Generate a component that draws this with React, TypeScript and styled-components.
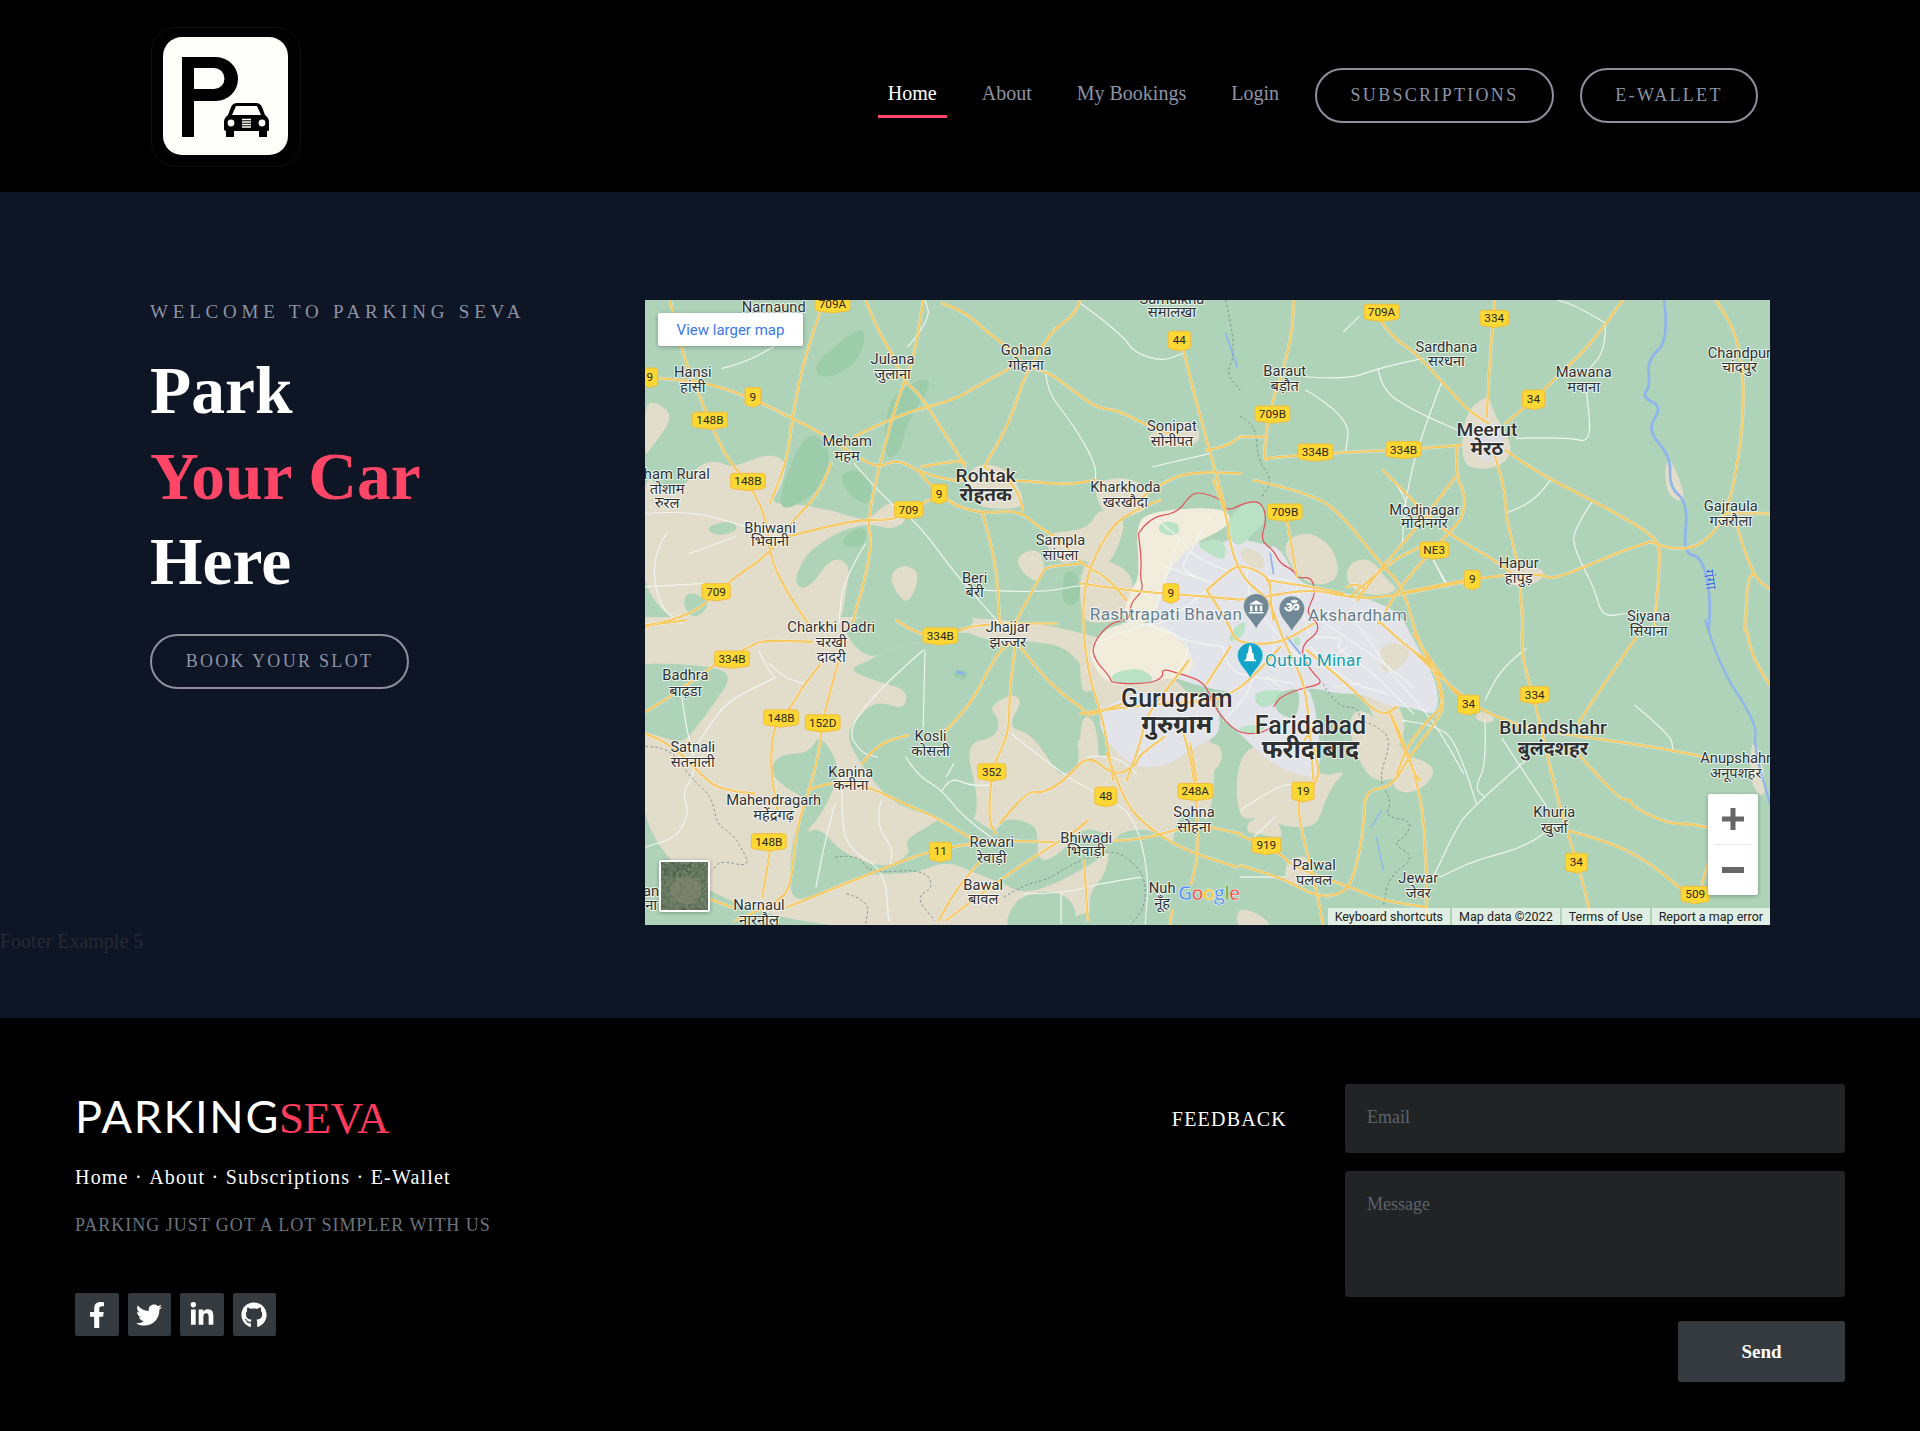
import React from 'react';
import styled, { createGlobalStyle } from 'styled-components';
import { FaFacebookF, FaTwitter, FaLinkedinIn, FaGithub } from 'react-icons/fa';

const serif = '"Liberation Serif", "Times New Roman", serif';
const mapFont = 'Roboto, "Noto Sans", sans-serif';

const GlobalStyle = createGlobalStyle`
  * { box-sizing: border-box; }
  html, body { margin: 0; padding: 0; background: #000; font-family: ${serif}; }
`;

const Page = styled.div`width: 1920px; height: 1431px; overflow: hidden;`;

const Header = styled.header`
  height: 192px; background: #000; display: flex; align-items: center; justify-content: space-between;
  padding: 0 162px 2px 151px;
`;
const LogoMark = styled.svg`width: 150px; height: 140px; display: block; align-self: flex-start; margin-top: 27px;`;
const Nav = styled.nav`display: flex; align-items: center; gap: 26px;`;
const NavLinks = styled.div`display: flex; align-items: center; gap: 25px;`;
const NavLink = styled.a<{ $active?: boolean }>`
  display: block; padding: 9px 10px 10px; line-height: 24px; font-size: 20px; text-decoration: none;
  color: ${p => (p.$active ? '#fff' : '#8d93a5')};
  border-bottom: 3px solid ${p => (p.$active ? '#ff4667' : 'transparent')};
`;
const OutlineButton = styled.a<{ $wide?: number }>`
  display: inline-flex; align-items: center; justify-content: center; height: 55px;
  width: ${p => p.$wide}px; border: 2px solid #8d8f9b; border-radius: 28px; color: #8d93a5;
  font-size: 18px; letter-spacing: 2.3px; text-decoration: none;
`;

const Hero = styled.section`height: 826px; background: #0e1524; padding-top: 108px;`;
const HeroRow = styled.div`display: flex; justify-content: space-between; padding: 0 150px; height: 625px;`;
const HeroCopy = styled.div`width: 470px;`;
const Eyebrow = styled.div`padding-top: 2px; font-size: 19px; line-height: 20px; letter-spacing: 4.8px; color: #8d93a5; white-space: nowrap;`;
const Headline = styled.h1`margin: 26px 0 29px; font-size: 67.5px; line-height: 85.7px; font-weight: 700;`;
const HeadlineLine = styled.span<{ $accent?: boolean }>`display: block; color: ${p => (p.$accent ? '#ff4667' : '#fff')};`;
const Caption = styled.div`font-size: 20px; line-height: 23px; padding-top: 5px; color: #262b33;`;

const MapFrame = styled.div`position: relative; width: 1125px; height: 625px; overflow: hidden; background: #aed3b8;`;
const MapCanvas = styled.svg`display: block; width: 1125px; height: 625px; font-family: ${mapFont};`;
const LargerMap = styled.a`
  position: absolute; left: 13px; top: 13px; width: 145px; height: 33px; background: #fff; border-radius: 2px;
  box-shadow: 0 1px 4px rgba(0,0,0,.3); color: #3b78e7; font: 15px ${mapFont};
  display: flex; align-items: center; justify-content: center; text-decoration: none;
`;
const ZoomControl = styled.div`
  position: absolute; left: 1063px; top: 494px; width: 50px; height: 101px; background: #fff; border-radius: 2px;
  box-shadow: 0 1px 4px rgba(0,0,0,.3); display: flex; flex-direction: column; align-items: center;
`;
const ZoomButton = styled.div`height: 50px; width: 100%; display: flex; align-items: center; justify-content: center;`;
const ZoomDivider = styled.div`width: 37px; height: 1px; background: #e6e6e6;`;
const Thumb = styled.div`
  position: absolute; left: 14px; top: 560px; width: 51px; height: 52px; border: 2px solid #fff; border-radius: 2px;
  box-shadow: 0 1px 4px rgba(0,0,0,.3); overflow: hidden; background: #4f6147;
`;
const ThumbArt = styled.svg`display: block; width: 100%; height: 100%;`;
const Attribution = styled.div`position: absolute; right: 0; bottom: 0; height: 17px; display: flex; gap: 2px;`;
const AttributionItem = styled.span`
  background: rgba(255,255,255,.62); color: #222; font: 12.5px/17px ${mapFont}; padding: 0 7px; white-space: nowrap;
`;

const Footer = styled.footer`
  height: 413px; background: #000; padding: 66px 75px 0; display: flex; justify-content: space-between;
`;
const FooterLeft = styled.div`display: flex; flex-direction: column;`;
const Brand = styled.div`display: flex; align-items: baseline; height: 56px; margin-top: 4px; white-space: nowrap;`;
const BrandFirst = styled.span`font: 400 45px/56px Lato, sans-serif; color: #fff; letter-spacing: 1.7px;`;
const BrandLast = styled.span`font: 400 45px/56px ${serif}; color: #ff3b5c; margin-left: -1px; letter-spacing: -0.4px;`;
const FooterLinks = styled.div`display: flex; margin-top: 21px; font-size: 20px; line-height: 24px; letter-spacing: 1.2px; color: #fff;`;
const FooterLink = styled.a`color: #fff; text-decoration: none;`;
const Dot = styled.span`width: 20.5px; text-align: center;`;
const Tagline = styled.div`margin-top: 25px; font-size: 18px; line-height: 22px; letter-spacing: .98px; color: #6e747b;`;
const Socials = styled.div`display: flex; gap: 9px; margin-top: 57px;`;
const Social = styled.a`
  width: 43.5px; height: 43px; background: #343a3d; border-radius: 2px; color: #fff; font-size: 26px;
  display: flex; align-items: center; justify-content: center;
`;
const Feedback = styled.form`display: flex; gap: 58px;`;
const FeedbackTitle = styled.div`margin-top: 22px; font-size: 20px; line-height: 26px; letter-spacing: 1.2px; color: #fff;`;
const FeedbackFields = styled.div`width: 500px; display: flex; flex-direction: column; align-items: flex-end;`;
const Input = styled.input`
  width: 100%; height: 69px; padding: 0 22px 2px; border: 0; border-radius: 3px; background: #212325; color: #fff;
  font: 18px ${serif}; &::placeholder { color: #5b636b; opacity: 1; }
`;
const TextArea = styled.textarea`
  width: 100%; height: 126px; margin-top: 18px; padding: 24px 22px; border: 0; border-radius: 3px; background: #212325;
  resize: none; display: block; color: #fff; font: 18px/1.1 ${serif}; &::placeholder { color: #5b636b; opacity: 1; }
`;
const Send = styled.button`
  width: 167px; height: 61px; margin-top: 24px; border: 0; border-radius: 3px; background: #343a3d; color: #fff;
  font: 700 19px ${serif};
`;

type Tile = 'nw' | 'ne' | 'sw' | 'se' | 'dl';
const tiles: Record<Tile, [number, number, number, number]> = {
  nw: [522.7, 236.8, 0.3125, 0.2722],
  ne: [1012.7, 236.8, 0.2812, 0.2722],
  sw: [522.7, 506.3, 0.3125, 0.2722],
  se: [1012.7, 506.3, 0.2812, 0.2722],
  dl: [882, 392, 0.2722, 0.2722],
};
const pts = (t: Tile, a: number[]) => {
  const [ox, oy, kx, ky] = tiles[t];
  const r: [number, number][] = [];
  for (let i = 0; i + 1 < a.length; i += 2) r.push([ox + a[i] * kx, oy + a[i + 1] * ky]);
  return r;
};
const f = (n: number) => n.toFixed(1);
const closedPath = (p: [number, number][]) => {
  const mid = (a: [number, number], b: [number, number]) => `${f((a[0] + b[0]) / 2)} ${f((a[1] + b[1]) / 2)}`;
  let d = `M${mid(p[p.length - 1], p[0])}`;
  p.forEach((q, i) => { d += `Q${f(q[0])} ${f(q[1])} ${mid(q, p[(i + 1) % p.length])}`; });
  return d + 'Z';
};
const openPath = (p: [number, number][]) => {
  let d = `M${f(p[0][0])} ${f(p[0][1])}`;
  for (let i = 1; i < p.length - 1; i++) {
    d += `Q${f(p[i][0])} ${f(p[i][1])} ${f((p[i][0] + p[i + 1][0]) / 2)} ${f((p[i][1] + p[i + 1][1]) / 2)}`;
  }
  const e = p[p.length - 1];
  return d + `L${f(e[0])} ${f(e[1])}`;
};

const TAN = '#e2dccb', GRN = '#aed3b8', DRK = '#9ccca9', GRY = '#e3e4e9', CRM = '#f1ecdc', LGT = '#b9e2c6';
const areas: [Tile, string, number[]][] = [
  ['nw', TAN, [13,335,50,340,85,375,60,430,25,480,13,500]],
  ['nw', TAN, [5,540,60,600,120,590,145,530,200,510,240,535,330,490,385,510,370,590,340,640,400,640,500,660,550,680,600,690,640,640,680,640,700,690,660,720,600,700,530,720,470,760,430,800,400,880,440,900,500,800,550,820,540,900,520,1030,5,1030]],
  ['nw', GRN, [170,710,240,690,260,720,200,740]],
  ['nw', GRN, [130,900,190,940,140,990,110,940]],
  ['nw', TAN, [655,850,690,820,735,850,700,950,660,890]],
  ['nw', TAN, [980,800,1040,770,1060,830,1040,880,1000,850]],
  ['nw', TAN, [1180,570,1300,560,1340,640,1290,680,1210,680]],
  ['nw', TAN, [850,530,950,520,1005,620,990,660,860,650]],
  ['nw', TAN, [1040,730,1170,720,1200,650,1280,680,1220,850,1150,800,1100,830]],
  ['nw', TAN, [1320,430,1450,380,1470,470,1340,470]],
  ['nw', DRK, [450,230,530,150,580,110,590,150,560,230,480,270]],
  ['nw', DRK, [660,310,750,260,760,290,700,390,680,490,640,510,640,400]],
  ['nw', DRK, [360,640,400,500,440,430,480,450,500,500,470,600,390,660]],
  ['nw', DRK, [520,560,560,530,610,580,600,650,550,620]],
  ['nw', DRK, [530,740,590,700,590,770,530,770]],
  ['nw', DRK, [1110,830,1150,860,1150,940,1100,950]],
  ['sw', TAN, [0,-10,1500,-10,1500,930,0,930,0,-10]],
  ['sw', GRN, [13,130,80,130,200,140,240,170,200,240,150,320,110,370,60,350,-10,330,-10,140]],
  ['sw', GRN, [540,150,640,190,700,210,690,270,620,240,570,290,540,340,560,400,620,500,680,560,800,600,850,620,880,590,880,510,850,370,930,350,940,300,910,260,970,220,1000,240,960,320,1020,340,1070,420,1100,470,1150,440,1140,340,1180,400,1230,420,1200,240,1130,80,1000,60,900,60,850,30,760,60,660,80,600,120]],
  ['sw', GRN, [340,440,370,400,440,400,470,340,520,430,510,500,470,590,430,640,470,620,530,700,640,745,710,700,690,660,750,620,820,570,880,600,930,640,950,590,1030,610,1040,650,1040,730,1100,700,1150,620,1230,640,1240,690,1090,790,1000,820,950,790,880,760,800,720,720,760,600,760,520,790,450,830,400,840,390,770,400,640,440,540,380,500,350,470]],
  ['sw', GRN, [560,-20,880,-20,860,30,760,60,660,80,600,120,530,40]],
  ['sw', GRN, [960,880,1000,820,1100,810,1150,880,1100,930,960,930]],
  ['sw', GRN, [1230,640,1340,620,1420,700,1500,760,1500,930,1180,930,1170,820,1220,760]],
  ['sw', DRK, [820,150,860,150,850,180,820,170]],
  ['se', GRN, [-200,560,-60,600,-100,800,-200,920]],
  ['se', TAN, [-10,410,70,360,190,420,240,470,310,450,270,490,240,560,220,620,130,620,60,590,-10,600]],
  ['se', TAN, [20,600,100,580,130,660,60,640,20,640]],
  ['se', TAN, [330,180,400,170,470,270,480,330,450,400,540,420,570,460,510,520,440,510,450,440,410,330]],
  ['se', TAN, [690,270,740,290,730,310,680,300]],
  ['se', TAN, [-10,860,60,880,100,930,-10,930]],
  ['se', TAN, [130,720,200,700,200,790,130,800]],
  ['se', TAN, [1480,360,1510,390,1530,540,1480,500]],
  ['ne', TAN, [650,370,720,310,735,370,795,470,760,530,680,540,640,510]],
  ['ne', '#dcdde2', [660,410,760,390,770,490,720,520,670,490]],
  ['ne', TAN, [770,830,880,830,880,870,820,890,770,880]],
  ['ne', TAN, [1230,530,1250,500,1300,640,1240,620]],
  ['dl', TAN, [600,190,680,150,760,200,780,290,720,320,650,290]],
  ['dl', TAN, [800,250,870,230,920,300,960,330,880,350,800,320]],
  ['dl', TAN, [830,680,900,720,940,780,1000,840,950,900,860,900,800,740]],
  ['dl', TAN, [0,240,100,240,170,300,130,420,60,430,0,420]],
  ['dl', TAN, [0,440,40,500,80,610,20,640,0,620]],
  ['dl', TAN, [0,700,50,720,60,900,0,900]],
  ['dl', TAN, [300,800,420,780,430,850,360,900,300,900]],
  ['dl', TAN, [170,860,260,860,270,900,170,900]],
  ['dl', GRY, [200,420,250,290,300,170,400,200,460,170,540,190,600,200,650,300,700,320,800,340,880,360,960,400,1000,480,1070,600,1075,710,990,680,930,680,850,640,760,640,700,620,600,640,450,640,300,600,200,560]],
  ['dl', GRY, [420,640,520,600,640,620,700,620,730,900,640,880,560,840,480,760,410,700]],
  ['dl', GRY, [60,680,200,630,400,640,430,760,340,800,260,860,150,860,60,760]],
  ['dl', TAN, [900,480,1000,500,960,570,900,580]],
  ['dl', TAN, [470,200,540,210,560,270,500,260]],
  ['dl', CRM, [165,125,230,90,440,80,455,135,340,190,290,240,250,300,225,425,120,440,150,330,180,290]],
  ['dl', CRM, [30,490,100,430,230,425,310,480,350,565,290,595,240,595,180,615,85,615,30,545]],
  ['dl', LGT, [440,120,500,60,550,70,560,120,530,150,480,200,450,180]],
  ['dl', LGT, [232,128,292,122,302,165,242,165]],
  ['dl', LGT, [340,190,430,170,440,240,400,230]],
  ['dl', LGT, [90,580,180,560,230,600,170,615,100,610]],
  ['dl', LGT, [520,630,640,630,570,680,530,680]],
  ['dl', LGT, [470,740,560,730,540,760,490,760]],
  ['dl', LGT, [460,440,500,420,490,470,440,490]],
  ['dl', LGT, [640,470,660,470,660,500,640,490]],
  ['dl', GRN, [580,650,640,620,660,640,650,720,590,700]],
  ['dl', GRN, [550,160,590,190,560,210]],
];

const water: [Tile, number, number[]][] = [
  ['ne', 2.2, [1230,30,1245,150,1180,210,1190,290,1165,320,1225,350,1180,420,1250,500,1245,590,1300,640,1285,790,1340,800,1365,920,1360,1020]],
  ['se', 1.8, [1350,0,1385,130,1500,310,1490,380,1540,560]],
  ['nw', 1.3, [1530,130,1560,230]],
  ['se', 1, [410,570,380,620]],
  ['se', 1, [395,650,415,750]],
  ['sw', 2.5, [830,155,845,160]],
  ['dl', 1.4, [570,220,580,280]],
  ['dl', 1.6, [620,470,660,520]],
];

const minor: [Tile, number[]][] = [
  ['nw', [1150,40,1200,80,1270,150,1290,185,1360,215,1420,190]],
  ['nw', [1060,240,1060,300,1130,400,1190,520,1190,570]],
  ['nw', [1340,530,1490,490]],
  ['nw', [700,170,760,90,745,30]],
  ['nw', [560,520,650,640,720,690,830,860,940,1000]],
  ['nw', [215,235,280,215,350,170]],
  ['nw', [15,670,130,660,280,710]],
  ['nw', [70,730,30,800,50,950,110,1000]],
  ['nw', [130,790,250,740]],
  ['nw', [15,890,170,880]],
  ['nw', [900,900,1050,910,1160,880,1280,900]],
  ['nw', [590,760,530,870,520,1000]],
  ['ne', [190,260,310,270,400,235,530,205]],
  ['ne', [400,235,410,300,500,360,630,420]],
  ['ne', [190,300,320,380,305,490]],
  ['ne', [585,275,520,450,480,620,470,760]],
  ['ne', [800,445,950,440,1020,460,1005,300]],
  ['ne', [1060,100,1060,180,1010,240]],
  ['ne', [1060,100,980,50,920,30]],
  ['ne', [900,570,860,630,770,670]],
  ['ne', [1025,630,965,720,970,780,1030,900,1050,980,1120,970]],
  ['ne', [560,810,600,880]],
  ['ne', [300,125,345,80]],
  ['sw', [740,90,630,200,540,330,580,400,620,410]],
  ['sw', [745,90,740,320]],
  ['sw', [695,410,720,460,790,510,830,570,880,620,930,660]],
  ['sw', [790,510,810,470,860,495,915,495]],
  ['sw', [820,430,800,470]],
  ['sw', [530,450,525,610,550,690,640,750,650,900]],
  ['sw', [510,550,490,630,460,800]],
  ['sw', [630,540,615,610,660,680,655,730]],
  ['sw', [970,340,1100,460,1210,530,1290,580,1330,760,1320,910]],
  ['sw', [110,230,120,320,150,450,110,520,130,570,100,650,15,680]],
  ['sw', [1000,820,1100,820,1200,790,1310,770]],
  ['sw', [1100,820,1100,910]],
  ['sw', [340,130,370,170,430,190]],
  ['sw', [310,90,345,170,360,170,230,240,180,320,150,370]],
  ['se', [760,355,890,560]],
  ['se', [1145,255,1250,345,1255,385]],
  ['se', [840,410,660,570,620,640,560,770]],
  ['se', [685,550,630,360,560,315,470,300]],
  ['se', [710,300,715,430,680,505,710,530]],
  ['se', [880,640,830,680,680,720,580,770]],
  ['se', [830,85,760,140,710,240]],
  ['se', [0,570,100,500,160,490]],
  ['se', [0,770,130,770]],
  ['se', [100,590,40,650]],
  ['dl', [210,105,300,170,340,230,440,270]],
  ['dl', [300,170,270,260,210,430]],
  ['dl', [400,90,320,230,300,270,400,310]],
  ['dl', [260,260,400,310]],
  ['dl', [380,330,260,430,200,430,40,490]],
  ['dl', [200,430,300,480,430,500]],
  ['dl', [130,430,220,430,340,490,290,580]],
  ['dl', [430,500,440,570,520,590,640,610]],
  ['dl', [500,270,500,340,560,420,620,500,660,530]],
  ['dl', [560,290,650,300,650,340,690,470]],
  ['dl', [580,460,580,560]],
  ['dl', [700,470,800,470,760,500,860,560,1000,700]],
  ['dl', [720,420,900,540,1000,620]],
  ['dl', [820,420,860,470,940,590,1060,720,1150,880]],
  ['dl', [690,500,780,600,920,640]],
  ['dl', [720,560,800,500]],
  ['dl', [0,310,160,330]],
  ['dl', [20,830,100,820,170,880]],
  ['dl', [520,590,500,650,430,720]],
  ['dl', [560,590,600,620]],
  ['dl', [760,620,840,610]],
  ['dl', [940,0,980,60,970,80]],
  ['dl', [1060,240,1100,320]],
];

const dashed: [Tile, number[]][] = [
  ['sw', [15,378,80,380,130,470,190,530,200,610,240,640,265,680,290,740,210,720,190,750]],
  ['sw', [510,710,570,700,600,760,740,745,770,800,720,830,770,900]],
  ['sw', [540,820,600,840,590,910]],
  ['sw', [950,830,1010,790,1060,780,1130,730,1240,680,1320,760,1320,860,1280,915]],
  ['se', [240,190,280,260,340,260,350,300,400,320,440,360,400,480,440,540,420,590,500,600,480,650,440,670,510,710,430,770,415,860]],
  ['ne', [0,380,45,400,50,510,95,570,60,625]],
  ['nw', [1530,30,1560,180,1530,250,1568,300]],
];

const red: [Tile, number[]][] = [
  ['dl', [175,160,210,110,290,100,330,45,360,35,430,60,440,95,500,65,545,65,560,120,540,180,580,210,600,250,640,270,650,295,695,290,705,340,690,370,680,400,715,430,710,460,670,490,665,530,700,580,730,610,660,625,600,650,580,680]],
  ['dl', [175,160,185,240,180,290,190,330,150,370,150,420,90,425,35,495,45,540,90,590,95,610,210,610,250,590,245,565,300,580,375,605,400,680,470,760,540,760,575,740]],
];

const roads: [Tile, number[]][] = [
  ['nw', [15,262,90,268,180,280,295,325,390,380,475,430,540,480,590,515,625,530,675,508,730,545,790,565,830,572,1000,570,1110,585,1190,570]],
  ['nw', [590,30,620,120,660,190,690,275,730,310,790,420,830,490,850,530]],
  ['nw', [740,30,720,190,690,275,660,380,625,530,595,690,605,760,590,860,550,1020]],
  ['nw', [790,40,850,65,900,120,960,170,1010,230]],
  ['nw', [1150,30,1140,70,1080,120,1050,170,1010,250,990,310,960,410,900,530]],
  ['nw', [1010,230,1060,240,1130,300,1195,355,1250,360,1330,410,1410,440]],
  ['nw', [560,440,670,375,820,330,880,290,965,235]],
  ['nw', [1410,130,1440,280,1490,490,1530,660]],
  ['nw', [80,30,85,70,115,200,150,300,185,400,230,510,285,580,330,680,340,800,380,900,440,1000]],
  ['nw', [470,70,430,200,400,370,385,510,340,640]],
  ['nw', [500,520,470,610,400,690,340,790,250,860,200,910,140,970,15,1010]],
  ['nw', [385,740,550,690,640,690,680,680,780,610,830,650,900,670,990,660,1040,710,1100,750,1150,820,1220,860,1270,930]],
  ['nw', [1000,660,990,590,900,530]],
  ['nw', [730,545,760,590,830,650]],
  ['nw', [735,530,830,510,850,520]],
  ['nw', [895,670,930,800,940,1000]],
  ['nw', [1290,640,1370,570,1450,545,1568,550]],
  ['nw', [1480,480,1530,470,1568,440]],
  ['nw', [970,1020,1050,850,1060,830,1150,820]],
  ['ne', [155,30,155,100,130,220,80,380,70,500,75,510]],
  ['ne', [75,505,220,490,470,480,640,465]],
  ['ne', [0,440,75,440]],
  ['ne', [410,95,440,140,510,190,590,280,660,360,720,400]],
  ['ne', [738,30,725,200,715,380]],
  ['ne', [1110,30,1030,150,920,260,850,330,770,400]],
  ['ne', [770,480,850,540,1000,620,1110,680,1210,745,1220,800,1200,1020]],
  ['ne', [1190,755,1110,780,910,870,870,850,700,860,480,905]],
  ['ne', [1190,755,1285,795,1400,715,1450,500,1465,280,1440,130,1380,30]],
  ['ne', [740,500,770,600,770,680,810,830,820,1020]],
  ['ne', [630,470,625,560,650,600,650,680,590,745,470,880,400,1000]],
  ['ne', [625,560,500,730,410,830,340,930]],
  ['ne', [415,540,480,610,530,660,600,730,740,810,800,860]],
  ['ne', [1440,700,1480,850,1540,900]],
  ['ne', [1540,670,1410,670]],
  ['ne', [1465,1020,1470,870,1490,850]],
  ['sw', [15,275,80,230,200,130]],
  ['sw', [200,130,285,80,320,60,450,65]],
  ['sw', [15,15,120,0]],
  ['sw', [670,0,720,40,790,50,880,10,1090,10]],
  ['sw', [470,135,430,190,390,270,350,310,340,450,360,570]],
  ['sw', [520,120,475,300,470,390,440,520,410,620,395,790,370,840,250,900]],
  ['sw', [340,690,320,830]],
  ['sw', [15,340,80,370,150,450,200,505,300,520]],
  ['sw', [440,510,500,480,600,500,680,545,790,600,870,660,920,660,1080,665]],
  ['sw', [580,430,620,370,700,345]],
  ['sw', [800,330,860,260,910,150,940,90,980,60]],
  ['sw', [980,80,965,210,965,340,920,440,910,600,930,640]],
  ['sw', [980,60,1040,150,1100,220,1165,270,1165,290,1260,250]],
  ['sw', [1220,400,1250,500,1300,600,1420,690,1560,740]],
  ['sw', [940,610,1010,510,1050,520,1110,480,1170,400,1240,470,1300,430,1300,410,1370,350]],
  ['sw', [1170,600,1130,640,1090,665,950,770,800,900]],
  ['sw', [385,860,600,760,760,690,870,670]],
  ['sw', [890,720,830,800,780,900]],
  ['sw', [1240,660,1310,660,1450,610,1568,640]],
  ['sw', [1420,340,1450,450,1460,700,1440,790]],
  ['sw', [1160,720,1170,900]],
  ['sw', [180,835,240,860]],
  ['sw', [1390,870,1385,915]],
  ['se', [0,735,120,770,220,830,300,820,330,770,360,620,360,510,440,500,490,410,580,290,590,250,560,130,490,85,400,0]],
  ['se', [440,285,490,400,530,560,540,730,540,915]],
  ['se', [180,400,190,300,240,480,170,520,170,600,220,800,240,915]],
  ['se', [500,90,640,230,740,290,860,330,1000,350,1200,380,1350,410]],
  ['se', [820,0,810,90,860,260,920,540,1000,800,1020,915]],
  ['se', [1150,50,1050,200,980,310]],
  ['se', [980,400,1100,540,1130,535,1140,560,1240,610,1310,610,1370,625]],
  ['se', [950,630,1060,660,1180,720,1285,810]],
  ['se', [1470,30,1480,100,1540,200]],
  ['se', [0,645,110,690,150,740,320,800,410,840,540,860]],
  ['se', [1360,720,1340,790]],
  ['dl', [400,0,440,100,450,200,490,300,570,360,600,460,650,560,680,640,700,900]],
  ['dl', [240,60,130,100,60,190,10,320,10,470,30,600,70,720,100,900]],
  ['dl', [520,0,700,40,790,110,900,250,970,320,1010,480,1080,600,1090,680,1040,720,980,800,950,880]],
  ['dl', [0,310,180,335,270,340,440,355,500,360,690,325,800,350,900,355,1180,300]],
  ['dl', [380,330,450,265,490,255,570,290,570,360,580,420]],
  ['dl', [380,330,440,420,460,470,490,490,600,490,700,430]],
  ['dl', [560,300,700,320,790,340]],
  ['dl', [450,500,380,610]],
  ['dl', [600,500,510,600,450,640,410,660,240,670,60,690,0,700]],
  ['dl', [325,540,290,590,200,700,180,790,140,900]],
  ['dl', [680,510,800,610,900,710,950,680]],
  ['dl', [930,700,1000,880,1020,900]],
  ['dl', [800,320,820,310,860,325,830,350]],
  ['dl', [810,350,920,250,1020,200]],
  ['dl', [620,120,650,290]],
  ['dl', [1000,460,1100,620,1180,680]],
  ['dl', [330,790,350,900]],
];

const shields: [number, number, string][] = [
  [680,248,'709A'],[1128,255,'709A'],[1220,260,'334'],[963,278,'44'],[531,308,'9'],[615,324,'9'],[1252,326,'34'],
  [580,343,'148B'],[1039,338,'709B'],[1074,369,'334B'],[1146,367,'334B'],[611,393,'148B'],[767,403,'9'],[742,416,'709'],
  [1049,418,'709B'],[1171,449,'NE3'],[956,484,'9'],[1202,473,'9'],[585,483,'709'],[768,519,'334B'],[598,538,'334B'],
  [1199,575,'34'],[1253,567,'334'],[638,586,'148B'],[672,590,'152D'],[810,630,'352'],[976,646,'248A'],[903,650,'48'],
  [1064,646,'19'],[628,687,'148B'],[768,695,'11'],[1034,690,'919'],[1287,704,'34'],[1384,730,'509'],
];

type Label = [number, number, string, number?];
const labels: Label[] = [
  [632,251,'Narnaund'],[566,304,'Hansi'],[566,316,'हांसी'],[729,293,'Julana'],[729,305,'जुलाना'],[838,286,'Gohana'],[838,298,'गोहाना'],
  [957,244,'Samalkha'],[957,255,'समालखा'],[1049,303,'Baraut'],[1049,315,'बड़ौत'],[1181,283,'Sardhana'],[1181,295,'सरधना'],[1293,304,'Mawana'],[1293,316,'मवाना'],
  [1420,288,'Chandpur'],[1420,300,'चांदपुर'],[692,360,'Meham'],[692,372,'महम'],[957,348,'Sonipat'],[957,360,'सोनीपत'],
  [1214,351,'Meerut',1],[1214,366,'मेरठ',4],[805,388,'Rohtak',1],[805,404,'रोहतक',4],[919,398,'Kharkhoda'],[919,410,'खरखौदा'],
  [553,387,'ham Rural'],[545,399,'तोशाम'],[545,411,'रुरल'],[1163,416,'Modinagar'],[1163,427,'मोदीनगर'],[1413,413,'Gajraula'],[1413,425,'गजरौला'],
  [629,431,'Bhiwani'],[629,442,'भिवानी'],[866,441,'Sampla'],[866,453,'सांपला'],[1240,460,'Hapur'],[1240,472,'हापुड़'],[796,472,'Beri'],[796,483,'बेरी'],
  [1346,503,'Siyana'],[1346,515,'सियाना'],[679,512,'Charkhi Dadri'],[679,524,'चरखी'],[679,536,'दादरी'],[823,512,'Jhajjar'],[823,524,'झज्जर'],
  [560,551,'Badhra'],[560,564,'बाढ़डा'],[961,570,'Gurugram',2],[961,591,'गुरुग्राम',5],[1070,592,'Faridabad',2],[1070,612,'फरीदाबाद',5],
  [1268,594,'Bulandshahr',3],[1268,611,'बुलंदशहर',4],[566,610,'Satnali'],[566,622,'सतनाली'],[760,601,'Kosli'],[760,613,'कोसली'],[695,630,'Kanina'],[695,641,'कनीना'],
  [1417,619,'Anupshahr'],[1417,631,'अनूपशहर'],[632,653,'Mahendragarh'],[632,665,'महेंद्रगढ़'],[1269,663,'Khuria'],[1269,676,'खुर्जा'],[975,663,'Sohna'],[975,675,'सोहना'],
  [810,687,'Rewari'],[810,700,'रेवाड़ी'],[887,684,'Bhiwadi'],[887,695,'भिवाड़ी'],[1073,706,'Palwal'],[1073,718,'पलवल'],[803,722,'Bawal'],[803,734,'बावल'],
  [1158,717,'Jewar'],[1158,729,'जेवर'],[949,725,'Nuh'],[949,737,'नूँह'],[620,739,'Narnaul'],[620,751,'नारनौल'],[532,727,'an'],[532,739,'ना'],
];
const labelSize: Record<number, number> = { 0: 12, 1: 15.6, 2: 20.4, 3: 15.6, 4: 15.6, 5: 20.4 };
const labelWeight: Record<number, number> = { 0: 400, 1: 500, 2: 500, 3: 500, 4: 700, 5: 700 };

const MapLabel = styled.text<{ $kind?: number }>`
  text-anchor: middle; dominant-baseline: central; paint-order: stroke; stroke: rgba(255,255,255,.75); stroke-width: 1.6px;
  stroke-linejoin: round; fill: #2f3133;
  font-size: ${p => labelSize[p.$kind ?? 0]}px;
  font-weight: ${p => labelWeight[p.$kind ?? 0]};
`;
const RiverLabel = styled.text`
  text-anchor: middle; dominant-baseline: central; font-size: 12px; fill: #3b6fd8; paint-order: stroke;
  stroke: rgba(255,255,255,.35); stroke-width: 1px;
`;
const PoiLabel = styled.text<{ $color: string }>`
  text-anchor: start; dominant-baseline: central; paint-order: stroke; stroke: rgba(255,255,255,.7); stroke-width: 1.6px;
  fill: ${p => p.$color}; font-size: 14px; letter-spacing: .2px;
`;
const PinGlyph = styled.text`text-anchor: middle; dominant-baseline: central; fill: #fff; font-size: 13px; font-weight: 700;`;
const ShieldText = styled.text`text-anchor: middle; dominant-baseline: central; font-size: 9.6px; fill: #2c2a1f;`;
const GoogleText = styled.text`font-family: "Open Sans", sans-serif; font-size: 16px; font-weight: 600; letter-spacing: -.6px;`;

const Shield = ({ x, y, t }: { x: number; y: number; t: string }) => {
  const w = 7.5 + t.length * 5.2;
  const h = t.length < 3 ? 13 : 11;
  return (
    <g>
      <path
        d={`M${x - w / 2 + 2} ${y - h / 2 - 1}H${x + w / 2 - 2}Q${x + w / 2} ${y - h / 2 - 1} ${x + w / 2} ${y - h / 2 + 1}V${y + h / 2 - 1}Q${x + w / 2} ${y + h / 2} ${x + w / 2 - 2} ${y + h / 2 + .4}L${x} ${y + h / 2 + 2}L${x - w / 2 + 2} ${y + h / 2 + .4}Q${x - w / 2} ${y + h / 2} ${x - w / 2} ${y + h / 2 - 1}V${y - h / 2 + 1}Q${x - w / 2} ${y - h / 2 - 1} ${x - w / 2 + 2} ${y - h / 2 - 1}Z`}
        fill="#fdd835" stroke="#f4bb3a" strokeWidth=".8"
      />
      <ShieldText x={x} y={y}>{t}</ShieldText>
    </g>
  );
};

const Pin = ({ x, y, color, children }: { x: number; y: number; color: string; children?: React.ReactNode }) => (
  <g>
    <path d={`M${x} ${y + 18.5}C${x - 2} ${y + 13} ${x - 10.4} ${y + 7} ${x - 10.4} ${y}A10.4 10.4 0 1 1 ${x + 10.4} ${y}C${x + 10.4} ${y + 7} ${x + 2} ${y + 13} ${x} ${y + 18.5}Z`} fill={color} stroke="#fff" strokeOpacity=".5" strokeWidth=".6" />
    {children}
  </g>
);

const MapArt = () => (
  <MapCanvas viewBox="527 245 918 510" aria-label="Map">
    <rect x="527" y="245" width="918" height="510" fill={GRN} />
    {areas.map(([t, c, a], i) => <path key={i} d={closedPath(pts(t, a))} fill={c} />)}
    <g fill="none" stroke="#8fb4ec" strokeLinejoin="round" strokeLinecap="round">
      {water.map(([t, w, a], i) => <path key={i} d={openPath(pts(t, a))} strokeWidth={w} />)}
    </g>
    <g fill="none" stroke="#f1f5f1" strokeWidth=".95" strokeLinejoin="round" strokeLinecap="round">
      {minor.map(([t, a], i) => <path key={i} d={openPath(pts(t, a))} />)}
    </g>
    <g fill="none" stroke="#7f8a8c" strokeWidth=".8" strokeDasharray="2 2">
      {dashed.map(([t, a], i) => <path key={i} d={openPath(pts(t, a))} />)}
    </g>
    <g fill="none" stroke="#e2545a" strokeWidth="1" strokeLinejoin="round">
      {red.map(([t, a], i) => <path key={i} d={openPath(pts(t, a))} />)}
    </g>
    <g fill="none" strokeLinejoin="round" strokeLinecap="round">
      {roads.map(([t, a], i) => <path key={i} d={openPath(pts(t, a))} stroke="#fff" strokeOpacity=".45" strokeWidth="2.8" />)}
      {roads.map(([t, a], i) => <path key={i} d={openPath(pts(t, a))} stroke="#f5bb45" strokeWidth="1.7" />)}
      {roads.map(([t, a], i) => <path key={i} d={openPath(pts(t, a))} stroke="#fde08a" strokeWidth=".6" />)}
    </g>
    {shields.map(([x, y, t], i) => <Shield key={i} x={x} y={y} t={t} />)}
    <RiverLabel x="1396" y="473" transform="rotate(82 1396 473)">गंगा</RiverLabel>
    {labels.map(([x, y, t, k], i) => <MapLabel key={i} x={x} y={y} $kind={k}>{t}</MapLabel>)}
    <PoiLabel x="890" y="501" $color="#667f8c">Rashtrapati Bhavan</PoiLabel>
    <PoiLabel x="1068" y="502" $color="#667f8c">Akshardham</PoiLabel>
    <PoiLabel x="1033" y="539" $color="#129eaf">Qutub Minar</PoiLabel>
    <Pin x={1025.7} y={495} color="#718996">
      <path d="M1019.700 493.500l6-3.500 6 3.500zM1020.700 494.500h2v4.500h-2zM1024.700 494.500h2v4.500h-2zM1028.700 494.500h2v4.500h-2zM1019.700 499.500h12v1.400h-12z" fill="#fff" />
    </Pin>
    <Pin x={1054.8} y={497} color="#718996"><PinGlyph x={1054.8} y={496}>ॐ</PinGlyph></Pin>
    <Pin x={1020.8} y={535} color="#12a5c9">
      <path d="M1020 527h1.600l1 6h.8l.8 5.500h1.300v1.300h-9.400v-1.300h1.300l.8-5.500h.8z" fill="#fff" />
    </Pin>
    <GoogleText x="962" y="735" stroke="#fff" strokeWidth=".4">
      <tspan fill="#4285f4">G</tspan><tspan fill="#ea4335">o</tspan><tspan fill="#fbbc05">o</tspan><tspan fill="#4285f4">g</tspan><tspan fill="#34a853">l</tspan><tspan fill="#ea4335">e</tspan>
    </GoogleText>
  </MapCanvas>
);

const Satellite = () => (
  <ThumbArt viewBox="0 0 51 52" aria-hidden="true">
    <defs>
      <filter id="sat" x="0" y="0" width="100%" height="100%">
        <feTurbulence type="fractalNoise" baseFrequency=".3" numOctaves="3" seed="7" />
        <feColorMatrix values="0 0 0 0 .2  0 0 0 0 .26  0 0 0 0 .18  .9 .9 0 0 -.3" />
      </filter>
    </defs>
    <rect width="51" height="52" fill="#46593f" />
    <ellipse cx="27" cy="31" rx="17" ry="15" fill="#746f5c" />
    <ellipse cx="14" cy="5" rx="24" ry="10" fill="#324b32" />
    <rect width="51" height="52" filter="url(#sat)" />
  </ThumbArt>
);

const Logo = () => (
  <LogoMark viewBox="0 0 150 140" aria-label="Parking Seva">
    <rect x=".5" y=".5" width="149" height="139" rx="24" fill="#000" stroke="#111" />
    <rect x="12" y="10" width="125" height="118" rx="19" fill="#fdfdf9" />
    <path fillRule="evenodd" d="M31 30H65A22 22 0 0 1 65 74H43V110H31ZM43 41V62H63A10.500 10.500 0 0 0 63 41Z" fill="#000" />
    <path d="M86 76H105Q109 76 111 80L114 88Q118 91 118 95V103Q118 104 116 104V110H108V104H83V110H75V104Q73 104 73 102V95Q73 91 77 88L80 80Q82 76 86 76Z" fill="#000" />
    <path d="M85 79H106L110 88H81Z" fill="#fdfdf9" />
    <circle cx="80" cy="96" r="3.400" fill="#fdfdf9" />
    <circle cx="111" cy="96" r="3.400" fill="#fdfdf9" />
    <path d="M91 92.500H100M91 95H100M91 97.500H100M91 100H100" stroke="#fdfdf9" strokeWidth="1.300" />
  </LogoMark>
);

export default function App() {
  return (
    <Page>
      <GlobalStyle />
      <Header>
        <Logo />
        <Nav>
          <NavLinks>
            <NavLink href="#" $active>Home</NavLink>
            <NavLink href="#">About</NavLink>
            <NavLink href="#">My Bookings</NavLink>
            <NavLink href="#">Login</NavLink>
          </NavLinks>
          <OutlineButton href="#" $wide={239}>SUBSCRIPTIONS</OutlineButton>
          <OutlineButton href="#" $wide={178}>E-WALLET</OutlineButton>
        </Nav>
      </Header>
      <Hero>
        <HeroRow>
          <HeroCopy>
            <Eyebrow>WELCOME TO PARKING SEVA</Eyebrow>
            <Headline>
              <HeadlineLine>Park</HeadlineLine>
              <HeadlineLine $accent>Your Car</HeadlineLine>
              <HeadlineLine>Here</HeadlineLine>
            </Headline>
            <OutlineButton href="#" $wide={259}>BOOK YOUR SLOT</OutlineButton>
          </HeroCopy>
          <MapFrame>
            <MapArt />
            <LargerMap href="#">View larger map</LargerMap>
            <ZoomControl>
              <ZoomButton>
                <svg width="22" height="22" viewBox="0 0 22 22" aria-hidden="true"><path d="M8.500 0h5v8.500H22v5h-8.500V22h-5v-8.500H0v-5h8.500z" fill="#666" /></svg>
              </ZoomButton>
              <ZoomDivider />
              <ZoomButton>
                <svg width="22" height="6" viewBox="0 0 22 6" aria-hidden="true"><rect width="22" height="6" fill="#666" /></svg>
              </ZoomButton>
            </ZoomControl>
            <Thumb><Satellite /></Thumb>
            <Attribution>
              <AttributionItem>Keyboard shortcuts</AttributionItem>
              <AttributionItem>Map data ©2022</AttributionItem>
              <AttributionItem>Terms of Use</AttributionItem>
              <AttributionItem>Report a map error</AttributionItem>
            </Attribution>
          </MapFrame>
        </HeroRow>
        <Caption>Footer Example 5</Caption>
      </Hero>
      <Footer>
        <FooterLeft>
          <Brand><BrandFirst>PARKING</BrandFirst><BrandLast>SEVA</BrandLast></Brand>
          <FooterLinks>
            <FooterLink href="#">Home</FooterLink><Dot>·</Dot>
            <FooterLink href="#">About</FooterLink><Dot>·</Dot>
            <FooterLink href="#">Subscriptions</FooterLink><Dot>·</Dot>
            <FooterLink href="#">E-Wallet</FooterLink>
          </FooterLinks>
          <Tagline>PARKING JUST GOT A LOT SIMPLER WITH US</Tagline>
          <Socials>
            <Social href="#" aria-label="Facebook"><FaFacebookF /></Social>
            <Social href="#" aria-label="Twitter"><FaTwitter /></Social>
            <Social href="#" aria-label="LinkedIn"><FaLinkedinIn /></Social>
            <Social href="#" aria-label="GitHub"><FaGithub /></Social>
          </Socials>
        </FooterLeft>
        <Feedback onSubmit={e => e.preventDefault()}>
          <FeedbackTitle>FEEDBACK</FeedbackTitle>
          <FeedbackFields>
            <Input placeholder="Email" />
            <TextArea placeholder="Message" />
            <Send type="submit">Send</Send>
          </FeedbackFields>
        </Feedback>
      </Footer>
    </Page>
  );
}
